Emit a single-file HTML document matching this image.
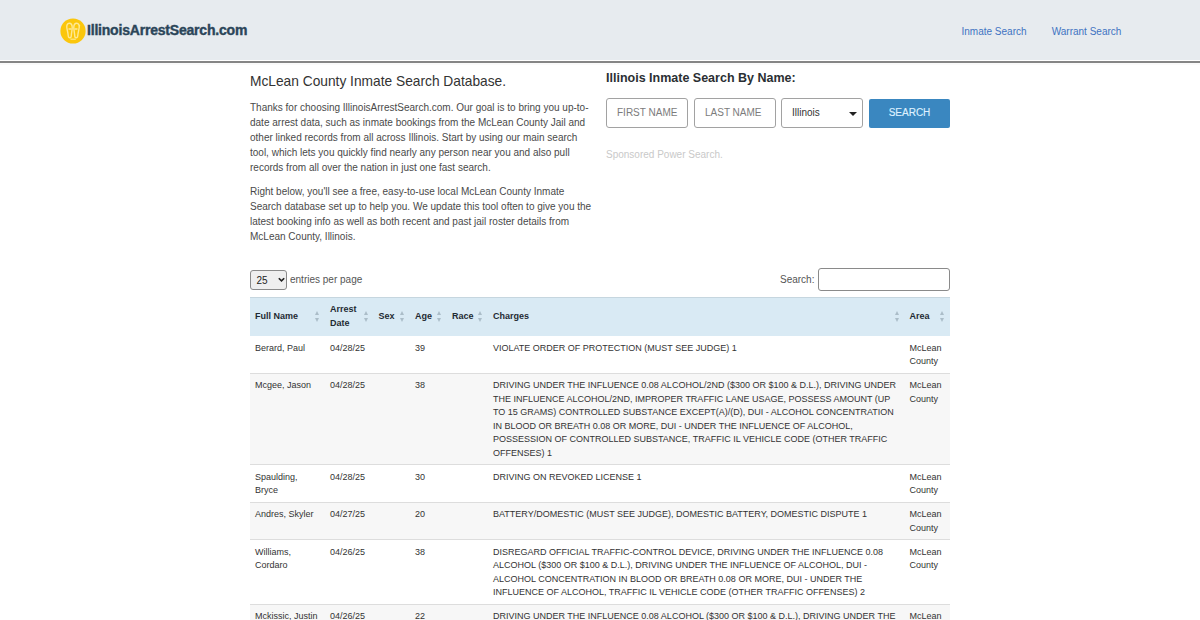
<!DOCTYPE html>
<html>
<head>
<meta charset="utf-8">
<style>
*{box-sizing:border-box;margin:0;padding:0}
html,body{width:1200px;height:620px;overflow:hidden;background:#fff}
body{position:relative;font-family:"Liberation Sans",sans-serif;color:#444}
.abs{position:absolute;white-space:nowrap}
#hdr{position:absolute;left:0;top:0;width:1200px;height:60px;background:#e7ebef}
#hline1{position:absolute;left:0;top:60px;width:1200px;height:1px;background:#fff}
#hline2{position:absolute;left:0;top:61px;width:1200px;height:2px;background:#858585}
#hline3{position:absolute;left:0;top:63px;width:1200px;height:2px;background:#fafafa}
#logotext{left:87px;top:19.6px;font-size:14px;letter-spacing:-0.2px;line-height:20px;font-weight:700;color:#2b4559;-webkit-text-stroke:0.4px #2b4559}
.nav{top:23.9px;font-size:10px;line-height:15px;color:#4173c2}
#title{left:250px;top:74px;font-size:13.75px;line-height:16px;color:#333}
.para{left:250px;font-size:10px;line-height:15px;color:#4a4a4a}
#rtitle{left:606px;top:69.8px;font-size:12.5px;line-height:16px;font-weight:700;color:#2b2f33}
.inp{position:absolute;top:98.2px;height:29.5px;width:81.5px;border:1px solid #a2a2a2;border-radius:3px;background:#fff}
.inp span{position:absolute;left:10px;top:5.5px;font-size:10px;line-height:15px;color:#7c7c7c;white-space:nowrap}
#btn{position:absolute;left:869px;top:99px;width:81px;height:29px;background:#3a87c0;border-radius:2px}
#btn span{position:absolute;left:0;width:81px;text-align:center;top:6px;font-size:10px;line-height:15px;color:#dff1ff;-webkit-text-stroke:0.15px #dff1ff}
#spons{left:606px;top:146.9px;font-size:10px;line-height:15px;color:#c9c9c9}
#sel25{position:absolute;left:250px;top:270px;width:37px;height:19.8px;border:1px solid #8a8a8a;border-radius:3px;background:#efefef}
#tbl{position:absolute;left:250px;top:297px;width:700px;border-collapse:collapse;table-layout:fixed;font-size:9px;line-height:13.5px;color:#333}
#tbl th{background:#d9eaf4;font-weight:700;color:#1f2a33;text-align:left;padding:5.4px 5px 6px 5px;border-top:1px solid #c6d6df;position:relative;vertical-align:middle}
#tbl td{padding:5.6px 5px 3.9px 5px;border-top:1px solid #ddd;vertical-align:top;color:#333}
#tbl tr.ev td{background:#f7f7f7}
#tbl tbody tr:first-child td{border-top:0}
.sort{position:absolute;right:5.4px;top:50%;width:4.5px;height:11px;margin-top:-6px}
.sort:before{content:"";position:absolute;left:0;top:0;border-left:2.25px solid transparent;border-right:2.25px solid transparent;border-bottom:4px solid #abbdc8}
.sort:after{content:"";position:absolute;left:0;top:7px;border-left:2.25px solid transparent;border-right:2.25px solid transparent;border-top:4px solid #abbdc8}
</style>
</head>
<body>
<div id="hdr"></div>
<div id="hline1"></div>
<div id="hline2"></div>
<div id="hline3"></div>
<svg id="logo" style="position:absolute;left:59.5px;top:18px" width="26" height="26" viewBox="0 0 26 26"><circle cx="13" cy="13" r="12.6" fill="#fbc60c"/><g fill="none" stroke="#fee995" stroke-width="1.4"><path d="M9.3 5.3 C7.2 5.3 6.6 7.5 6.8 9.5 C7.1 12 8 14.5 8.2 17.5 C8.3 19 8.8 19.8 9.8 19.8 C10.8 19.8 11.3 19 11.3 17.5 C11.5 14.5 12.2 12 12.2 9.5 C12.2 7.3 11.5 5.3 9.3 5.3 Z"/><path d="M16.7 5.3 C14.5 5.3 13.8 7.3 13.8 9.5 C13.8 12 14.5 14.5 14.7 17.5 C14.7 19 15.2 19.8 16.2 19.8 C17.2 19.8 17.7 19 17.8 17.5 C18 14.5 18.9 12 19.2 9.5 C19.4 7.5 18.8 5.3 16.7 5.3 Z"/><path d="M8.5 11 L11.5 11 M14.5 11 L17.5 11 M19 7.5 L20 8" /></g><path d="M10.5 21.2 L15.8 21.2" stroke="#fde98f" stroke-width="1.2"/></svg>
<div class="abs" id="logotext">IllinoisArrestSearch.com</div>
<div class="abs nav" style="left:961.5px">Inmate Search</div>
<div class="abs nav" style="left:1051.7px">Warrant Search</div>

<div class="abs" id="title">McLean County Inmate Search Database.</div>
<div class="abs para" style="top:99.5px">Thanks for choosing IllinoisArrestSearch.com. Our goal is to bring you up-to-<br>date arrest data, such as inmate bookings from the McLean County Jail and<br>other linked records from all across Illinois. Start by using our main search<br>tool, which lets you quickly find nearly any person near you and also pull<br>records from all over the nation in just one fast search.</div>
<div class="abs para" style="top:183.5px">Right below, you'll see a free, easy-to-use local McLean County Inmate<br>Search database set up to help you. We update this tool often to give you the<br>latest booking info as well as both recent and past jail roster details from<br>McLean County, Illinois.</div>

<div class="abs" id="rtitle">Illinois Inmate Search By Name:</div>
<div class="inp" style="left:606px"><span>FIRST NAME</span></div>
<div class="inp" style="left:694px"><span>LAST NAME</span></div>
<div class="inp" style="left:781px"><span style="color:#333">Illinois</span><i style="position:absolute;left:67px;top:12.5px;border-left:4px solid transparent;border-right:4px solid transparent;border-top:4px solid #222"></i></div>
<div id="btn"><span>SEARCH</span></div>
<div class="abs" id="spons">Sponsored Power Search.</div>

<div id="sel25"><svg style="position:absolute;left:26.5px;top:6px" width="7" height="6" viewBox="0 0 7 6"><path d="M0.8 1.2 L3.5 3.9 L6.2 1.2" fill="none" stroke="#222" stroke-width="1.6"/></svg></div>
<div class="abs" style="left:256.5px;top:272.8px;font-size:10px;line-height:15px;color:#222">25</div>
<div class="abs" style="left:290px;top:271.5px;font-size:10px;line-height:15px;color:#555">entries per page</div>
<div class="abs" style="left:780px;top:272px;font-size:10px;line-height:15px;color:#555">Search:</div>
<div style="position:absolute;left:817.5px;top:268.4px;width:132.5px;height:22.6px;border:1px solid #8a8a8a;border-radius:3px;background:#fff"></div>

<table id="tbl">
<colgroup><col style="width:75px"><col style="width:48.5px"><col style="width:36.5px"><col style="width:37px"><col style="width:41px"><col style="width:416.5px"><col style="width:45.5px"></colgroup>
<thead><tr>
<th>Full Name<i class="sort"></i></th>
<th>Arrest<br>Date<i class="sort"></i></th>
<th>Sex<i class="sort"></i></th>
<th>Age<i class="sort"></i></th>
<th>Race<i class="sort"></i></th>
<th>Charges<i class="sort"></i></th>
<th>Area<i class="sort"></i></th>
</tr></thead>
<tbody>
<tr><td>Berard, Paul</td><td>04/28/25</td><td></td><td>39</td><td></td><td>VIOLATE ORDER OF PROTECTION (MUST SEE JUDGE) 1</td><td>McLean<br>County</td></tr>
<tr class="ev"><td>Mcgee, Jason</td><td>04/28/25</td><td></td><td>38</td><td></td><td>DRIVING UNDER THE INFLUENCE 0.08 ALCOHOL/2ND ($300 OR $100 &amp; D.L.), DRIVING UNDER<br>THE INFLUENCE ALCOHOL/2ND, IMPROPER TRAFFIC LANE USAGE, POSSESS AMOUNT (UP<br>TO 15 GRAMS) CONTROLLED SUBSTANCE EXCEPT(A)/(D), DUI - ALCOHOL CONCENTRATION<br>IN BLOOD OR BREATH 0.08 OR MORE, DUI - UNDER THE INFLUENCE OF ALCOHOL,<br>POSSESSION OF CONTROLLED SUBSTANCE, TRAFFIC IL VEHICLE CODE (OTHER TRAFFIC<br>OFFENSES) 1</td><td>McLean<br>County</td></tr>
<tr><td>Spaulding,<br>Bryce</td><td>04/28/25</td><td></td><td>30</td><td></td><td>DRIVING ON REVOKED LICENSE 1</td><td>McLean<br>County</td></tr>
<tr class="ev"><td>Andres, Skyler</td><td>04/27/25</td><td></td><td>20</td><td></td><td>BATTERY/DOMESTIC (MUST SEE JUDGE), DOMESTIC BATTERY, DOMESTIC DISPUTE 1</td><td>McLean<br>County</td></tr>
<tr><td>Williams,<br>Cordaro</td><td>04/26/25</td><td></td><td>38</td><td></td><td>DISREGARD OFFICIAL TRAFFIC-CONTROL DEVICE, DRIVING UNDER THE INFLUENCE 0.08<br>ALCOHOL ($300 OR $100 &amp; D.L.), DRIVING UNDER THE INFLUENCE OF ALCOHOL, DUI -<br>ALCOHOL CONCENTRATION IN BLOOD OR BREATH 0.08 OR MORE, DUI - UNDER THE<br>INFLUENCE OF ALCOHOL, TRAFFIC IL VEHICLE CODE (OTHER TRAFFIC OFFENSES) 2</td><td>McLean<br>County</td></tr>
<tr class="ev"><td>Mckissic, Justin</td><td>04/26/25</td><td></td><td>22</td><td></td><td>DRIVING UNDER THE INFLUENCE 0.08 ALCOHOL ($300 OR $100 &amp; D.L.), DRIVING UNDER THE<br>INFLUENCE OF ALCOHOL 1</td><td>McLean<br>County</td></tr>
</tbody>
</table>
</body>
</html>
